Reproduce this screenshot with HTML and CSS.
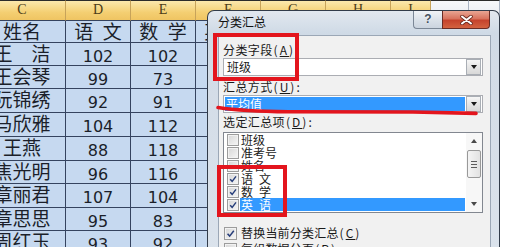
FILE: index.html
```html
<!DOCTYPE html>
<html lang="zh-CN">
<head>
<meta charset="utf-8">
<title>分类汇总</title>
<link rel="stylesheet" href="styles.css">
</head>
<body>
<div class="screen">
  <div class="sheet-wrap">
    <div class="sheet">
      <div class="hd">C</div><div class="hd">D</div><div class="hd">E</div><div class="hd">F</div><div class="hd">G</div><div class="hd">H</div><div class="hd">I</div><div class="hd off"></div><div class="hd off"></div>

      <div class="c t">姓名</div><div class="c t">语&ensp;文</div><div class="c t">数&ensp;学</div><div class="c t">英&ensp;语</div><div class="c rest"></div>
      <div class="c t">王　洁</div><div class="c n">102</div><div class="c n">102</div><div class="c"></div><div class="c rest"></div>
      <div class="c t">王会琴</div><div class="c n">99</div><div class="c n">73</div><div class="c"></div><div class="c rest"></div>
      <div class="c t">阮锦绣</div><div class="c n">92</div><div class="c n">91</div><div class="c"></div><div class="c rest"></div>
      <div class="c t">马欣雅</div><div class="c n">104</div><div class="c n">112</div><div class="c"></div><div class="c rest"></div>
      <div class="c t">王燕</div><div class="c n">88</div><div class="c n">118</div><div class="c"></div><div class="c rest"></div>
      <div class="c t">焦光明</div><div class="c n">96</div><div class="c n">116</div><div class="c"></div><div class="c rest"></div>
      <div class="c t">章丽君</div><div class="c n">107</div><div class="c n">104</div><div class="c"></div><div class="c rest"></div>
      <div class="c t">章思思</div><div class="c n">95</div><div class="c n">83</div><div class="c"></div><div class="c rest"></div>
      <div class="c t">周红玉</div><div class="c n">93</div><div class="c n">92</div><div class="c"></div><div class="c rest"></div>
    </div>
  </div>

  <div class="dialog">
    <div class="titlebar">
      <span class="title">分类汇总</span>
      <div class="caption">
        <div class="btn-help">?</div>
        <div class="btn-close">
          <svg width="13" height="10" viewBox="0 0 13 10"><path d="M2 1.5 L11 8.5 M11 1.5 L2 8.5" stroke="#6a2a1f" stroke-width="3.6" stroke-linecap="round"/><path d="M2 1.5 L11 8.5 M11 1.5 L2 8.5" stroke="#ffffff" stroke-width="2" stroke-linecap="round"/></svg>
        </div>
      </div>
    </div>

    <div class="client">
      <div class="label">分类字段<span class="acc">(<u>A</u>)</span></div>
      <div class="combo">
        <span class="value">班级</span>
        <span class="drop"><i class="tri-down"></i></span>
      </div>

      <div class="label l2">汇总方式<span class="acc">(<u>U</u>)</span>:</div>
      <div class="combo">
        <span class="value sel">平均值</span>
        <span class="drop"><i class="tri-down"></i></span>
      </div>

      <div class="label l3">选定汇总项<span class="acc">(<u>D</u>)</span>:</div>
      <div class="list">
        <div class="items">
          <div class="item"><span class="cb"></span><span class="txt">班级</span></div>
          <div class="item"><span class="cb"></span><span class="txt">准考号</span></div>
          <div class="item"><span class="cb"></span><span class="txt">姓名</span></div>
          <div class="item"><span class="cb"><svg viewBox="0 0 12 12"><path d="M2.6 6.2 L5 8.8 L9.6 2.8" fill="none" stroke="#263d7a" stroke-width="1.7"/></svg></span><span class="txt">语&ensp;文</span></div>
          <div class="item"><span class="cb"><svg viewBox="0 0 12 12"><path d="M2.6 6.2 L5 8.8 L9.6 2.8" fill="none" stroke="#263d7a" stroke-width="1.7"/></svg></span><span class="txt">数&ensp;学</span></div>
          <div class="item"><span class="cb"><svg viewBox="0 0 12 12"><path d="M2.6 6.2 L5 8.8 L9.6 2.8" fill="none" stroke="#263d7a" stroke-width="1.7"/></svg></span><span class="txt hl">英&ensp;语</span></div>
        </div>
        <div class="scroll">
          <span class="arrow"><i class="tri-up"></i></span>
          <span class="thumb"><i></i><i></i><i></i></span>
          <span class="track"></span>
          <span class="arrow"><i class="tri-down small"></i></span>
        </div>
      </div>

      <div class="opt first"><span class="cb big"><svg viewBox="0 0 13 13"><path d="M3 6.8 L5.5 9.6 L10.4 3.2" fill="none" stroke="#263d7a" stroke-width="1.8"/></svg></span>替换当前分类汇总<span class="acc">(<u>C</u>)</span></div>
      <div class="opt"><span class="cb big"></span>每组数据分页<span class="acc">(<u>P</u>)</span></div>
    </div>

    <div class="mark mark-a"></div>
    <div class="mark mark-b"></div>
    <svg class="stroke" width="291" height="240" viewBox="0 0 291 240">
      <path d="M10 96.5 C 30 99.5, 55 100.5, 80 100.8 L 205 101 L 268 102.4" fill="none" stroke="#e3151d" stroke-width="3.6" stroke-linecap="round"/>
    </svg>
  </div>
</div>
</body>
</html>
```

FILE: styles.css
```css
* { box-sizing: border-box; }
html, body { margin: 0; padding: 0; background: #ffffff; }

.screen {
  position: relative;
  width: 516px;
  height: 247px;
  overflow: hidden;
  background: #ffffff;
}

/* ---------- spreadsheet ---------- */
.sheet-wrap {
  width: 500px;
  height: 247px;
  overflow: hidden;
}
.sheet {
  margin-left: -21px;
  width: 521px;
  display: grid;
  grid-template-columns: 87px 65px 65px 65px 65px 65px 40px 38px 1fr;
  grid-template-rows: 21px 22px 23px 23px 24px 24px 24px 23px 24px 23px 23px;
}
.hd {
  background: linear-gradient(#fbe8ad, #f4cf72 60%, #efc462);
  border-top: 1px solid #2b2b2b;
  border-bottom: 1px solid #35435f;
  border-right: 1px solid #c7a35a;
  font: 14px/18px "Liberation Serif", serif;
  color: #4a3b17;
  text-align: center;
}
.hd.off {
  background: linear-gradient(#f7f8fa, #e6eaf0);
  border-right-color: #a9b3c2;
}
.c {
  background: #c6d9f0;
  border-right: 1px solid #35435f;
  border-bottom: 1px solid #35435f;
  color: #1b1f2a;
  text-align: center;
  white-space: nowrap;
}
.c.rest { grid-column: span 5; }
.t {
  font: 19px/18px "Noto Sans CJK SC", sans-serif;
  padding-top: 1px;
}
.n {
  font: 16px/18px "DejaVu Sans", sans-serif;
  padding-top: 5px;
}

/* ---------- dialog window ---------- */
.dialog {
  position: absolute;
  left: 207px;
  top: 10px;
  width: 293px;
  height: 245px;
  border: 1px solid #323c4a;
  border-bottom: 0;
  border-radius: 7px 7px 0 0;
  background: linear-gradient(180deg, #e2e8ef 0, #cfdae6 22px, #d3dce7 60px, #dbe3ec 100%);
  padding: 0 8px 0 10px;
  display: flex;
  flex-direction: column;
  font-family: "Noto Sans CJK SC", sans-serif;
  font-size: 12px;
  color: #1a1a1a;
}
.titlebar {
  height: 24px;
  flex: none;
  display: flex;
  align-items: flex-start;
}
.title {
  line-height: 21px;
  color: #111;
}
.caption {
  margin-left: auto;
  margin-right: 1px;
  display: flex;
}
.btn-help {
  width: 29px;
  height: 18px;
  border: 1px solid #7b8796;
  border-top: 0;
  border-right: 0;
  border-radius: 0 0 0 4px;
  background: linear-gradient(#f0f3f7, #dbe2ea 50%, #cbd4df);
  font: bold 12px/17px "Liberation Sans", sans-serif;
  color: #44505f;
  text-align: center;
  text-shadow: 0 0 2px #ffffff;
}
.btn-close {
  width: 48px;
  height: 18px;
  border: 1px solid #6b2c24;
  border-top: 0;
  border-radius: 0 0 4px 0;
  background: linear-gradient(#e9a593, #d8735e 45%, #c5432c 55%, #d3623f);
  display: flex;
  align-items: center;
  justify-content: center;
}
.btn-close svg { display: block; }

.client {
  flex: 1;
  border: 1px solid #9ba7b6;
  border-bottom: 0;
  background: #f1f1f1;
  padding: 6px 7px 0 4px;
  display: flex;
  flex-direction: column;
}
.label {
  height: 16px;
  line-height: 16px;
  white-space: nowrap;
  letter-spacing: 0.4px;
}
.acc { letter-spacing: 2px; margin-left: 1px; }
.label.l2 { margin-top: 3px; }
.label.l3 { margin-top: 1px; }

.combo {
  height: 18px;
  flex: none;
  border: 1px solid #abadb3;
  background: #ffffff;
  display: flex;
  align-items: center;
}
.combo .value {
  flex: 1;
  height: 14px;
  line-height: 14px;
  padding-left: 3px;
  white-space: nowrap;
}
.combo .value.sel {
  margin: 0 1px 0 1px;
  padding-left: 1px;
  background: #3399ff;
  color: #ffffff;
}
.drop {
  width: 15px;
  height: 16px;
  margin-right: 1px;
  border: 1px solid #a9aeb5;
  background: linear-gradient(#f6f6f6, #e6e6e6 50%, #d8d8d8);
  display: flex;
  align-items: center;
  justify-content: center;
}
.tri-down {
  width: 0;
  height: 0;
  border-left: 3.5px solid transparent;
  border-right: 3.5px solid transparent;
  border-top: 4px solid #1a1a1a;
}
.tri-down.small { border-top-color: #4a4a4a; }
.tri-up {
  width: 0;
  height: 0;
  border-left: 3.5px solid transparent;
  border-right: 3.5px solid transparent;
  border-bottom: 4px solid #4a4a4a;
}

.list {
  height: 81px;
  flex: none;
  margin-top: 2px;
  border: 1px solid #828790;
  background: #ffffff;
  display: flex;
}
.items { flex: 1; }
.item {
  height: 13px;
  display: flex;
  align-items: center;
  line-height: 13px;
  white-space: nowrap;
}
.cb {
  width: 12px;
  height: 12px;
  flex: none;
  margin-left: 3px;
  margin-right: 1px;
  border: 1px solid #9c9c9c;
  background: linear-gradient(135deg, #d6d6d6, #f6f6f6);
  box-shadow: inset 0 0 0 1px #f2f2f2;
}
.cb svg { display: block; width: 100%; height: 100%; }
.txt { padding: 0 1px; }
.txt.hl {
  flex: 1;
  margin-right: 1px;
  background: #3399ff;
  color: #ffffff;
}

.scroll {
  width: 16px;
  flex: none;
  display: flex;
  flex-direction: column;
  align-items: center;
  background: #f7f7f7;
}
.arrow {
  height: 16px;
  width: 16px;
  display: flex;
  align-items: center;
  justify-content: center;
}
.thumb {
  width: 14px;
  height: 28px;
  margin-top: 1px;
  border: 1px solid #999999;
  border-radius: 2px;
  background: linear-gradient(90deg, #f4f4f4, #e2e2e2);
  display: flex;
  flex-direction: column;
  align-items: center;
  justify-content: center;
  gap: 2px;
}
.thumb i {
  display: block;
  width: 6px;
  height: 1px;
  background: #5c5c5c;
}
.track { flex: 1; }

.opt {
  height: 16px;
  line-height: 16px;
  display: flex;
  align-items: center;
  white-space: nowrap;
  letter-spacing: 0.2px;
}
.opt.first { margin-top: 12px; }
.cb.big {
  width: 13px;
  height: 13px;
  margin-left: 1px;
  margin-right: 4px;
}

/* annotations drawn over the dialog */
.mark {
  position: absolute;
  border: 4px solid #e3151d;
}
.mark-a { left: 5px; top: 22px; width: 86px; height: 48px; }
.mark-b { left: 9px; top: 154px; width: 70px; height: 52px; }
.stroke {
  position: absolute;
  left: 0;
  top: 0;
  overflow: visible;
  pointer-events: none;
}
```
